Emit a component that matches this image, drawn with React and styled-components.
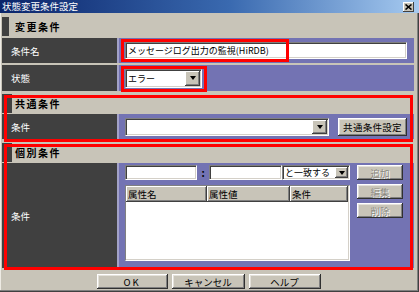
import React from 'react'
import styled, { createGlobalStyle } from 'styled-components'

const GlobalStyle = createGlobalStyle`
  html, body {
    margin: 0;
    padding: 0;
    background: #c8c4b8;
  }
  body {
    font-family: "Noto Sans CJK JP", "DejaVu Sans", sans-serif;
    font-size: 10px;
  }
`

const Window = styled.div`
  width: 419px;
  height: 292px;
  box-sizing: border-box;
  background: #c8c4b8;
  box-shadow: inset -1px -1px #404040, inset -2px -2px #808080, inset 1px 0 #eeebe4;
  display: flex;
  flex-direction: column;
`

const TitleBar = styled.div`
  height: 13px;
  display: flex;
  align-items: center;
  padding: 0 5px 0 2px;
  background: linear-gradient(to right, #0a246a, #3a6ab0 55%, #a6caf0);
  color: #fff;
  font-size: 9.5px;
  line-height: 13px;
`

const CloseBtn = styled.div`
  margin-left: auto;
  width: 11px;
  height: 10px;
  box-sizing: border-box;
  background: #c8c4b8;
  box-shadow: inset -1px -1px #404040, inset 1px 1px #fff;
  display: flex;
  align-items: center;
  justify-content: center;
`

const Body = styled.div`
  padding: 2px 5px 0 2px;
  display: flex;
  flex-direction: column;
`

const Group = styled.div`
  position: relative;
  margin-top: ${p => p.$mt || 0}px;
`

const Highlight = styled.div`
  position: absolute;
  top: ${p => p.$t}px;
  left: ${p => p.$l}px;
  right: ${p => (p.$r === undefined ? 'auto' : p.$r + 'px')};
  bottom: ${p => p.$b}px;
  width: ${p => (p.$w ? p.$w + 'px' : 'auto')};
  border: 3px solid #ff0000;
  pointer-events: none;
  z-index: 2;
`

const Header = styled.div`
  height: 19px;
  display: flex;
  align-items: center;
  margin-bottom: ${p => p.$mb || 0}px;
  font-weight: bold;
  letter-spacing: 1.5px;
  color: #000;
  &::before {
    content: '';
    width: ${p => p.$strip || 7}px;
    align-self: stretch;
    background: #404040;
    margin-right: ${p => 13 - (p.$strip || 7)}px;
  }
`

const Row = styled.div`
  display: grid;
  grid-template-columns: 115px 1fr;
  column-gap: 2px;
  height: ${p => p.$h}px;
  margin-bottom: ${p => p.$mb || 0}px;
  background: #a3a2c8;
`

const Label = styled.div`
  background: #404040;
  color: #fff;
  display: flex;
  align-items: center;
  padding-left: 9px;
  font-size: 9.5px;
`

const Cell = styled.div`
  background: #7373b3;
  display: flex;
  align-items: ${p => (p.$top ? 'flex-start' : 'center')};
  padding: ${p => (p.$top ? '2px 7px 0 6px' : '0 7px 0 6px')};
  gap: ${p => p.$gap || 0}px;
`

const Field = styled.div`
  position: relative;
  box-sizing: border-box;
  width: ${p => (p.$w ? p.$w + 'px' : 'auto')};
  flex: ${p => (p.$w ? 'none' : 1)};
  height: ${p => p.$h || 17}px;
  background: #fff;
  border-top: 1px solid #808080;
  border-left: 1px solid #808080;
  border-right: 1px solid #fff;
  border-bottom: 1px solid #fff;
  box-shadow: inset 1px 1px #404040, inset -1px -1px #d4d0c8;
  display: flex;
  align-items: center;
  padding-left: 2px;
  font-size: 9px;
  color: #000;
  white-space: nowrap;
`

const Drop = styled.div`
  margin-left: auto;
  margin-right: 1px;
  width: ${p => p.$w || 15}px;
  align-self: stretch;
  margin-top: 1px;
  margin-bottom: 1px;
  box-sizing: border-box;
  background: #c8c4b8;
  box-shadow: inset -1px -1px #404040, inset 1px 1px #fff, inset -2px -2px #808080;
  display: flex;
  align-items: center;
  justify-content: center;
  flex: none;
  &::after {
    content: '';
    border-left: 3.5px solid transparent;
    border-right: 3.5px solid transparent;
    border-top: 4px solid #000;
  }
`

const Button = styled.div`
  box-sizing: border-box;
  width: ${p => p.$w}px;
  height: ${p => p.$h || 15}px;
  background: #c8c4b8;
  box-shadow: inset -1px -1px #303030, inset 1px 1px #fff, inset -2px -2px #808080, inset 2px 2px #e4e1da;
  display: flex;
  align-items: center;
  justify-content: center;
  font-size: 9.5px;
  letter-spacing: ${p => p.$ls || 0}px;
  color: ${p => (p.$disabled ? '#8a8880' : '#000')};
  text-shadow: ${p => (p.$disabled ? '1px 1px #fff' : 'none')};
  flex: none;
`

const Detail = styled.div`
  display: grid;
  grid-template-columns: 225px 46px;
  column-gap: 7px;
`

const FilterLine = styled.div`
  display: flex;
  align-items: center;
  height: 15px;
`

const Colon = styled.span`
  width: 12px;
  text-align: center;
  font-weight: bold;
  color: #000;
`

const Table = styled.div`
  margin-top: 5px;
  height: 76px;
  box-sizing: border-box;
  background: #fff;
  border-top: 1px solid #808080;
  border-left: 1px solid #808080;
  border-right: 1px solid #fff;
  border-bottom: 1px solid #fff;
  box-shadow: inset -1px -1px #d4d0c8;
`

const TableHead = styled.div`
  display: grid;
  grid-template-columns: 81px 83px 58px 1fr;
  height: 16px;
`

const HeadCell = styled.div`
  background: #c8c4b8;
  box-shadow: inset -1px -1px #404040, inset 1px 1px #fff, inset -2px -2px #808080;
  display: flex;
  align-items: center;
  padding-left: 2px;
  font-size: 9.5px;
  color: #000;
`

const SideButtons = styled.div`
  display: flex;
  flex-direction: column;
  gap: 4px;
`

const Footer = styled.div`
  display: flex;
  justify-content: center;
  gap: 4px;
  margin-top: 6px;
  padding-left: 1px;
`

const CloseIcon = () => (
  <svg width="7" height="6" viewBox="0 0 7 6">
    <path d="M0.5 0.5 L6.5 5.5 M6.5 0.5 L0.5 5.5" stroke="#000" strokeWidth="1.6" />
  </svg>
)

export default function App() {
  return (
    <>
      <GlobalStyle />
      <Window>
        <TitleBar>
          状態変更条件設定
          <CloseBtn><CloseIcon /></CloseBtn>
        </TitleBar>
        <Body>
          <Group $mt={2}>
            <Header $mb={2}>変更条件</Header>
            <Row $h={25} $mb={2}>
              <Label>条件名</Label>
              <Cell>
                <Field>
                  メッセージログ出力の監視(HiRDB)
                  <Highlight $t={-4} $l={-5} $b={-4} $w={162} />
                </Field>
              </Cell>
            </Row>
            <Row $h={26}>
              <Label>状態</Label>
              <Cell>
                <Field $w={77} $h={19}>
                  エラー
                  <Drop $w={15} />
                  <Highlight $t={-4} $l={-5} $b={-5} $r={-6} />
                </Field>
              </Cell>
            </Row>
          </Group>

          <Group $mt={3}>
            <Header $mb={1} $strip={10}>共通条件</Header>
            <Row $h={25}>
              <Label>条件</Label>
              <Cell $gap={9}>
                <Field $h={18}>
                  <Drop $w={15} />
                </Field>
                <Button $w={69} $h={18} $ls={0.3}>共通条件設定</Button>
              </Cell>
            </Row>
            <Highlight $t={1} $l={2} $r={1} $b={-3} />
          </Group>

          <Group $mt={4}>
            <Header $mb={1} $strip={10}>個別条件</Header>
            <Row $h={105}>
              <Label>条件</Label>
              <Cell $top>
                <Detail>
                  <div>
                    <FilterLine>
                      <Field $w={72} $h={15} />
                      <Colon>:</Colon>
                      <Field $w={73} $h={15} />
                      <Field $w={68} $h={15}>
                        と一致する
                        <Drop $w={13} />
                      </Field>
                    </FilterLine>
                    <Table>
                      <TableHead>
                        <HeadCell>属性名</HeadCell>
                        <HeadCell>属性値</HeadCell>
                        <HeadCell>条件</HeadCell>
                        <div />
                      </TableHead>
                    </Table>
                  </div>
                  <SideButtons>
                    <Button $w={46} $disabled>追加</Button>
                    <Button $w={46} $disabled>編集</Button>
                    <Button $w={46} $disabled>削除</Button>
                  </SideButtons>
                </Detail>
              </Cell>
            </Row>
            <Highlight $t={1} $l={2} $r={1} $b={-2} />
          </Group>

          <Footer>
            <Button $w={71} $ls={2}>OK</Button>
            <Button $w={73}>キャンセル</Button>
            <Button $w={72}>ヘルプ</Button>
          </Footer>
        </Body>
      </Window>
    </>
  )
}
